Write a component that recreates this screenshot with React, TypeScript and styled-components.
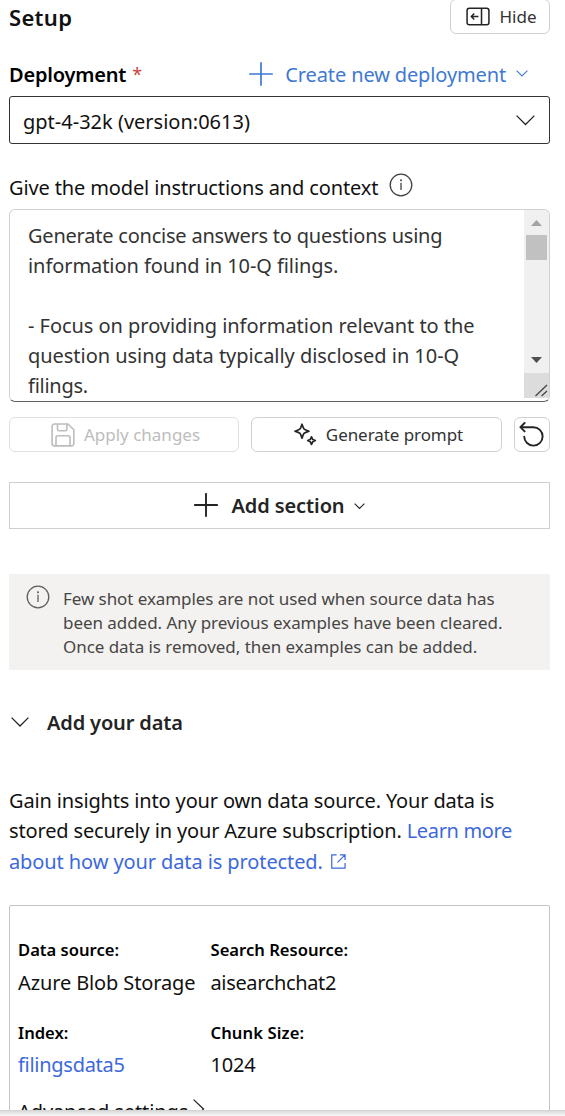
import React from "react";
import styled, { createGlobalStyle } from "styled-components";

const GlobalStyle = createGlobalStyle`
  * { box-sizing: border-box; }
  body { margin: 0; background: #fff; font-family: "Noto Sans", "Open Sans", sans-serif; color: #111; overflow: hidden; }
  button { font-family: inherit; margin: 0; padding: 0; background: #fff; }
  svg { display: block; flex: none; }
`;

const Text = styled.span<{ $size?: number; $track?: number; $weight?: number; $color?: string }>`
  white-space: pre;
  font-size: ${(p) => p.$size ?? 20}px;
  letter-spacing: ${(p) => p.$track ?? 0}px;
  font-weight: ${(p) => p.$weight ?? 400};
  color: ${(p) => p.$color ?? "inherit"};
`;

const Screen = styled.div`
  height: 1116px;
  display: flex;
  flex-direction: column;
  overflow: hidden;
`;
const Panel = styled.main`
  height: 1110px;
  flex: none;
  padding: 0 15px 0 9px;
  overflow: hidden;
`;
const BottomEdge = styled.div`
  height: 6px;
  flex: none;
  background: linear-gradient(#d2d2d2, #e2e2e2 35%, #f8f8f8);
`;
const Header = styled.header`
  height: 34px;
  display: flex;
  justify-content: space-between;
  align-items: flex-end;
`;
const Title = styled.h1`
  margin: 0;
  height: 33px;
  line-height: 32px;
  font-size: 0;
`;
const OutlineButton = styled.button<{ $w: number; $shift?: number; $disabled?: boolean }>`
  width: ${(p) => p.$w}px;
  height: 35px;
  flex: none;
  padding-left: ${(p) => p.$shift ?? 0}px;
  border: 1px solid ${(p) => (p.$disabled ? "#e0e0e0" : "#d1d1d1")};
  border-radius: 6px;
  display: flex;
  align-items: center;
  justify-content: center;
  gap: 9px;
  color: ${(p) => (p.$disabled ? "#bdbdbd" : "#333")};
`;
const DeployRow = styled.div`
  margin-top: 26px;
  height: 28px;
  display: flex;
  align-items: center;
`;
const Star = styled.span`
  margin-left: 6px;
  font-size: 18px;
  color: #c5453f;
  line-height: 28px;
`;
const CreateLink = styled.a`
  margin-left: auto;
  margin-right: 22px;
  display: flex;
  align-items: center;
  gap: 12px;
  color: #3f79d2;

  span { margin-right: -2px; }
  svg:first-child { margin-bottom: 1px; }
`;
const Select = styled.div`
  margin-top: 8px;
  height: 48px;
  border: 1px solid #333;
  border-radius: 3px;
  padding: 2px 14px 0 13px;
  display: flex;
  align-items: center;
  justify-content: space-between;
`;
const FieldLabel = styled.div`
  margin-top: 28px;
  height: 30px;
  display: flex;
  align-items: center;
  gap: 11px;

  svg { margin-bottom: 4px; }
`;
const Editor = styled.div`
  margin-top: 7px;
  height: 193px;
  border: 1px solid #d1d1d1;
  border-bottom-color: #616161;
  border-radius: 6px;
  display: flex;
  overflow: hidden;
`;
const EditorLines = styled.div`
  flex: 1;
  padding: 11px 0 0 18px;
  color: #333;
`;
const Line = styled.div<{ $h: number }>`
  height: ${(p) => p.$h}px;
  line-height: ${(p) => p.$h}px;
  white-space: pre;
`;
const Scrollbar = styled.div`
  width: 25px;
  height: 188px;
  background: #f0f0f0;
  display: flex;
  flex-direction: column;
  align-items: center;
`;
const Arrow = styled.svg<{ $top: number }>`
  margin-top: ${(p) => p.$top}px;
`;
const Thumb = styled.div`
  width: 21px;
  height: 25px;
  margin-top: 9px;
  background: #c1c1c1;
`;
const Grip = styled.div`
  width: 25px;
  height: 25px;
  margin-top: auto;
  background: #dcdcdc;
`;
const Actions = styled.div`
  margin-top: 15px;
  display: flex;
  justify-content: space-between;
`;
const AddSection = styled.button`
  margin-top: 30px;
  width: 100%;
  height: 47px;
  border: 1px solid #cfcfcf;
  display: flex;
  align-items: center;
  justify-content: center;
  gap: 13px;
  color: #242424;

  span { margin-right: -4px; }
  svg:first-child { margin-bottom: 2px; }
  svg:last-child { margin-top: 2px; }
`;
const Notice = styled.div`
  margin-top: 45px;
  height: 96px;
  background: #f3f2f1;
  color: #484644;
  padding: 13px 0 0 17px;
  display: flex;
  gap: 13px;

  svg { margin-top: -2px; }
`;
const Section = styled.h2`
  margin: 37px 0 0;
  padding-left: 2px;
  height: 30px;
  font-size: 0;
  display: flex;
  align-items: center;
  gap: 18px;
  color: #242424;
`;
const Paragraph = styled.div`
  margin-top: 49px;
`;
const LinkLine = styled(Line)`
  display: flex;
  align-items: center;
  gap: 8px;
  color: #3d68dc;
`;
const Card = styled.div`
  margin-top: 28px;
  height: 240px;
  border: 1px solid #c4c4c4;
  border-radius: 2px;
  padding: 29px 0 0 8px;
`;
const Grid = styled.div`
  display: grid;
  grid-template-columns: 192.5px 1fr;
  grid-template-rows: 33px 50px 32px 47px;
  line-height: 30px;
`;
const Advanced = styled.div`
  display: flex;
  align-items: flex-start;
  gap: 5px;
  line-height: 30px;

  svg { margin-top: 2px; }
`;

const Plus = ({ color, w = 1.7 }: { color: string; w?: number }) => (
  <svg width="24" height="24" viewBox="0 0 24 24" stroke={color} strokeWidth={w} strokeLinecap="round">
    <path d="M12 0.9v22.2M0.9 12h22.2" />
  </svg>
);
const Chevron = ({ w, color = "#242424", sw = 1.3 }: { w: number; color?: string; sw?: number }) => (
  <svg width={w} height={w * 0.6} viewBox={`0 0 ${w} ${w * 0.6}`} fill="none" stroke={color} strokeWidth={sw}>
    <path d={`M.6 .6L${w / 2} ${w / 2}L${w - 0.6} .6`} />
  </svg>
);
const Info = ({ color }: { color: string }) => (
  <svg width="24" height="24" viewBox="0 0 24 24" fill="none" stroke={color} strokeWidth="1.3">
    <circle cx="12" cy="12" r="10.8" />
    <path d="M12 9.8v7.2" />
    <circle cx="12" cy="7.2" r="1" fill={color} stroke="none" />
  </svg>
);

export default function App() {
  return (
    <>
      <GlobalStyle />
      <Screen>
        <Panel>
          <Header>
            <Title><Text $size={22} $weight={600} $track={0.3}>Setup</Text></Title>
            <OutlineButton $w={100} $shift={3}>
              <svg width="24" height="19" viewBox="0 0 25 20" fill="none" stroke="#242424" strokeWidth="1.6" strokeLinejoin="round">
                <rect x="1" y="1.4" width="23" height="17.2" rx="2.4" />
                <path d="M16.2 1.4v17.2M13 10H5.4M8.6 6.8L5.4 10l3.2 3.2" />
              </svg>
              <Text $size={17}>Hide</Text>
            </OutlineButton>
          </Header>

          <DeployRow>
            <Text $weight={600} $track={-0.2} $color="#000">Deployment</Text>
            <Star>*</Star>
            <CreateLink>
              <Plus color="#3f79d2" />
              <Text $track={-0.13}>Create new deployment</Text>
              <Chevron w={12} color="#3f79d2" sw={1.1} />
            </CreateLink>
          </DeployRow>

          <Select>
            <Text $track={0}>gpt-4-32k (version:0613)</Text>
            <Chevron w={19} />
          </Select>

          <FieldLabel>
            <Text $track={-0.13}>Give the model instructions and context</Text>
            <Info color="#424242" />
          </FieldLabel>

          <Editor>
            <EditorLines>
              <Line $h={30}><Text $track={-0.22}>Generate concise answers to questions using</Text></Line>
              <Line $h={30}><Text $track={-0.07}>information found in 10-Q filings.</Text></Line>
              <Line $h={30} />
              <Line $h={30}><Text $track={-0.04}>- Focus on providing information relevant to the</Text></Line>
              <Line $h={30}><Text $track={-0.04}>question using data typically disclosed in 10-Q</Text></Line>
              <Line $h={30}><Text $track={-0.25}>filings.</Text></Line>
            </EditorLines>
            <Scrollbar>
              <Arrow $top={10} width="11" height="6"><path d="M5.5 0L11 6H0z" fill="#a3a3a3" /></Arrow>
              <Thumb />
              <Arrow $top={97} width="11" height="6"><path d="M0 0h11L5.5 6z" fill="#505050" /></Arrow>
              <Grip>
                <svg width="25" height="25" fill="none" stroke="#444" strokeWidth="1.3">
                  <path d="M11.5 23L23 12M17.5 23L23 18" />
                </svg>
              </Grip>
            </Scrollbar>
          </Editor>

          <Actions>
            <OutlineButton $w={230} $shift={3} $disabled>
              <svg width="24" height="24" viewBox="0 0 24 24" fill="none" stroke="#bdbdbd" strokeWidth="1.6" strokeLinejoin="round">
                <path d="M3.5 1H17l5.8 5.8v13.7a2.4 2.4 0 0 1-2.4 2.4H3.5a2.4 2.4 0 0 1-2.4-2.4V3.5A2.4 2.4 0 0 1 3.5 1z" />
                <path d="M6.5 1v5a1.7 1.7 0 0 0 1.7 1.7h6a1.7 1.7 0 0 0 1.7-1.7V1M5 22.8v-8.1a2 2 0 0 1 2-2h10a2 2 0 0 1 2 2v8.1" />
              </svg>
              <Text $size={17}>Apply changes</Text>
            </OutlineButton>
            <OutlineButton $w={251} $shift={3}>
              <svg width="24" height="24" viewBox="0 0 24 24" fill="none" stroke="#242424" strokeWidth="1.7" strokeLinejoin="round">
                <path d="M9 1.2l1.3 3.6a3 3 0 0 0 1.9 1.9L16 8.2l-3.8 1.4a3 3 0 0 0-1.9 1.9L9 15.2l-1.3-3.7a3 3 0 0 0-1.9-1.9L2 8.2l3.8-1.5a3 3 0 0 0 1.9-1.9z" />
                <path d="M18.5 13.8l1.2 2.6 2.6 1.2-2.6 1.2-1.2 2.6-1.2-2.6-2.6-1.2 2.6-1.2z" />
              </svg>
              <Text $size={17} $track={-0.07}>Generate prompt</Text>
            </OutlineButton>
            <OutlineButton $w={36}>
              <svg width="26" height="26" viewBox="0 0 26 26" fill="none" stroke="#242424" strokeWidth="1.9" strokeLinecap="round" strokeLinejoin="round">
                <path d="M5.6 1L1.4 5.2l4.2 4.2M1.6 5.2h12.8a9.2 9.2 0 1 1-9.2 9.4" />
              </svg>
            </OutlineButton>
          </Actions>

          <AddSection>
            <Plus color="#242424" w={1.9} />
            <Text $weight={600} $track={-0.1}>Add section</Text>
            <Chevron w={11} sw={1.1} />
          </AddSection>

          <Notice>
            <Info color="#605e5c" />
            <div>
              <Line $h={24}><Text $size={17} $track={-0.07}>Few shot examples are not used when source data has</Text></Line>
              <Line $h={24}><Text $size={17} $track={-0.05}>been added. Any previous examples have been cleared.</Text></Line>
              <Line $h={24}><Text $size={17} $track={-0.05}>Once data is removed, then examples can be added.</Text></Line>
            </div>
          </Notice>

          <Section>
            <Chevron w={18} />
            <Text $weight={600} $track={-0.15}>Add your data</Text>
          </Section>

          <Paragraph>
            <Line $h={30.3}><Text $track={-0.15}>Gain insights into your own data source. Your data is</Text></Line>
            <Line $h={30.3}>
              <Text $track={-0.15}>{"stored securely in your Azure subscription. "}</Text>
              <Text $track={-0.35} $color="#3d68dc">Learn more</Text>
            </Line>
            <LinkLine $h={30.3}>
              <Text $track={-0.1}>about how your data is protected.</Text>
              <svg width="15" height="15" viewBox="0 0 16 16" fill="none" stroke="#3d68dc" strokeWidth="1.3">
                <path d="M6 1H.8v14H15V9.5M9.5 1H15v5.5M15 1L7 9" />
              </svg>
            </LinkLine>
          </Paragraph>

          <Card>
            <Grid>
              <Text $size={16.6} $weight={600} $color="#000">Data source:</Text>
              <Text $size={16.6} $weight={600} $color="#000">Search Resource:</Text>
              <Text $track={-0.12}>Azure Blob Storage</Text>
              <Text $track={-0.35}>aisearchchat2</Text>
              <Text $size={16.6} $weight={600} $color="#000">Index:</Text>
              <Text $size={16.6} $weight={600} $track={0.1} $color="#000">Chunk Size:</Text>
              <Text $track={-0.28} $color="#3d68dc">filingsdata5</Text>
              <Text $track={-0.2}>1024</Text>
            </Grid>
            <Advanced>
              <Text $track={-0.1}>Advanced settings</Text>
              <svg width="12" height="20" fill="none" stroke="#242424" strokeWidth="1.3"><path d="M.6 .6L10.5 10L.6 19.4" /></svg>
            </Advanced>
          </Card>
        </Panel>
        <BottomEdge />
      </Screen>
    </>
  );
}
